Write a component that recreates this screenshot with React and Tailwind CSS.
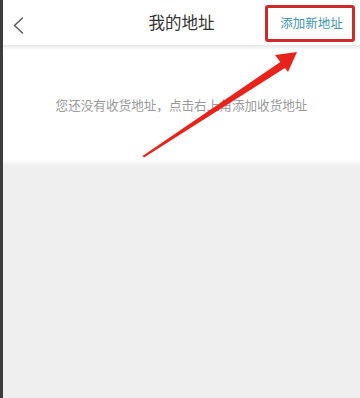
import React from 'react';

const cjk = { fontFamily: '"Noto Sans CJK SC", "Noto Sans", sans-serif' };

const App = () => {
  return (
    <div className="relative flex h-[398px] w-[360px] overflow-hidden bg-[#efefef]" style={cjk}>
      {/* dark edge on the left */}
      <div className="w-[3px] shrink-0 bg-[#3c3c3c]" />

      <div className="flex flex-1 flex-col">
        {/* header */}
        <div className="relative flex h-[45px] items-center justify-center bg-white">
          <button className="absolute left-[8px] top-[15px] flex h-[20px] w-[14px] items-center justify-center">
            <svg width="11" height="17" viewBox="0 0 11 17" fill="none">
              <path d="M9.5 1 L1.5 8.5 L9.5 16" stroke="#555" strokeWidth="1.4" strokeLinecap="round" strokeLinejoin="round" />
            </svg>
          </button>
          <h1 className="text-[16.5px] leading-none text-[#333]">我的地址</h1>
          <div className="absolute right-[5px] top-[5px] flex h-[37px] w-[90px] items-center justify-center rounded-[3px] border-[3px] border-[#cf2a2a]">
            <span className="pl-[3px] text-[12.5px] leading-none text-[#3f95ac]">添加新地址</span>
          </div>
        </div>
        <div className="h-[5px] bg-gradient-to-b from-[#e6e6e6] to-white" />

        {/* empty state */}
        <div className="flex h-[110px] flex-col items-center bg-white pt-[49px]">
          <p className="text-[12.6px] leading-none text-[#9a9a9a]">您还没有收货地址，点击右上角添加收货地址</p>
        </div>
        <div className="h-[5px] bg-gradient-to-b from-white to-[#efefef]" />
        <div className="flex-1" />
      </div>

      {/* annotation arrow */}
      <svg className="pointer-events-none absolute left-0 top-0" width="360" height="398" viewBox="0 0 360 398">
        <path d="M142.5 156 L282.5 60.5 L286.5 67 L144 157.5 Z" fill="#e8231c" />
        <path d="M297 52 L275 55 L288 72 Z" fill="#e8231c" />
      </svg>
    </div>
  );
};

export default App;
